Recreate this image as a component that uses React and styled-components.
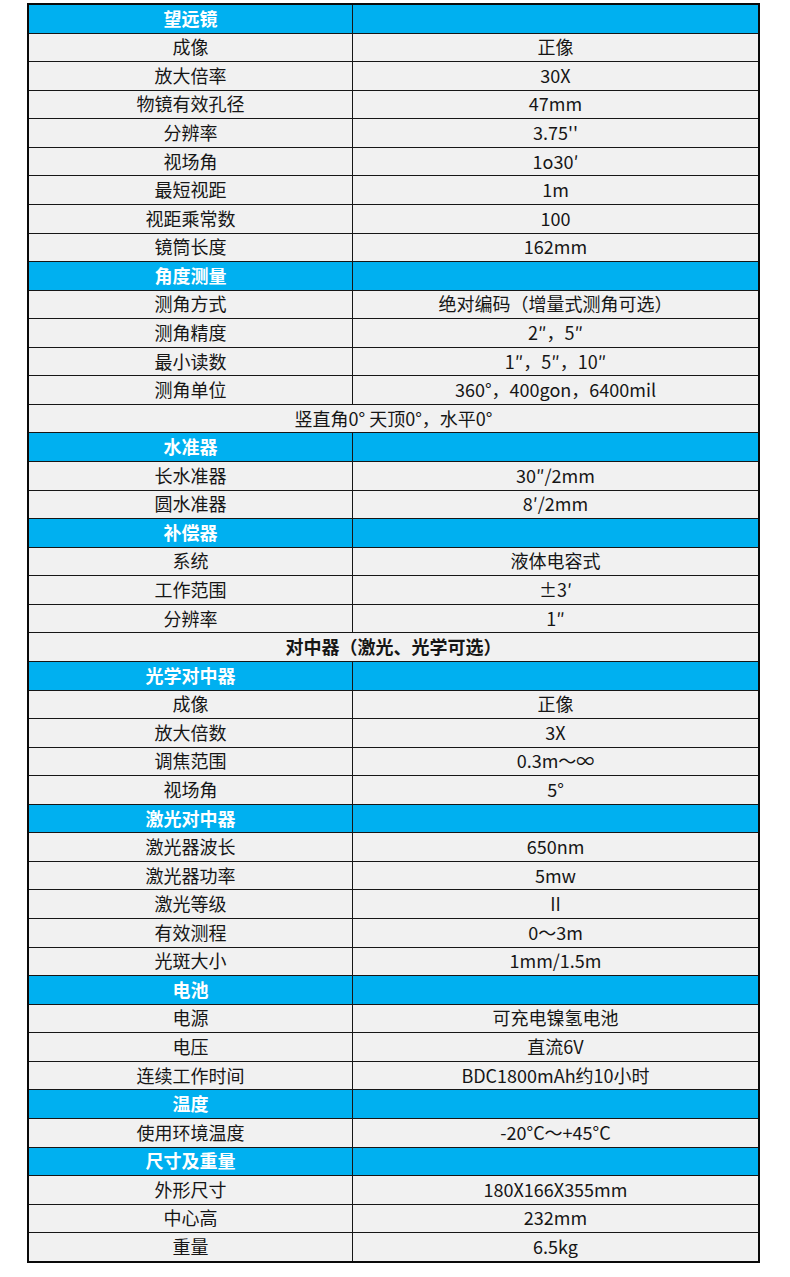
import React from 'react';
import styled, { createGlobalStyle } from 'styled-components';

const rows = [
  { type: 'head', label: '望远镜' },
  { label: '成像', value: '正像' },
  { label: '放大倍率', value: '30X' },
  { label: '物镜有效孔径', value: '47mm' },
  { label: '分辨率', value: "3.75''" },
  { label: '视场角', value: '1o30′' },
  { label: '最短视距', value: '1m' },
  { label: '视距乘常数', value: '100' },
  { label: '镜筒长度', value: '162mm' },
  { type: 'head', label: '角度测量' },
  { label: '测角方式', value: '绝对编码（增量式测角可选）' },
  { label: '测角精度', value: '2″，5″' },
  { label: '最小读数', value: '1″，5″，10″' },
  { label: '测角单位', value: '360°，400gon，6400mil' },
  { type: 'full', label: '竖直角0° 天顶0°，水平0°' },
  { type: 'head', label: '水准器' },
  { label: '长水准器', value: '30″/2mm' },
  { label: '圆水准器', value: '8′/2mm' },
  { type: 'head', label: '补偿器' },
  { label: '系统', value: '液体电容式' },
  { label: '工作范围', value: '±3′' },
  { label: '分辨率', value: '1″' },
  { type: 'full', label: '对中器（激光、光学可选）', bold: true },
  { type: 'head', label: '光学对中器' },
  { label: '成像', value: '正像' },
  { label: '放大倍数', value: '3X' },
  { label: '调焦范围', value: '0.3m～∞' },
  { label: '视场角', value: '5°' },
  { type: 'head', label: '激光对中器' },
  { label: '激光器波长', value: '650nm' },
  { label: '激光器功率', value: '5mw' },
  { label: '激光等级', value: 'II' },
  { label: '有效测程', value: '0～3m' },
  { label: '光斑大小', value: '1mm/1.5m' },
  { type: 'head', label: '电池' },
  { label: '电源', value: '可充电镍氢电池' },
  { label: '电压', value: '直流6V' },
  { label: '连续工作时间', value: 'BDC1800mAh约10小时' },
  { type: 'head', label: '温度' },
  { label: '使用环境温度', value: '-20°C～+45°C' },
  { type: 'head', label: '尺寸及重量' },
  { label: '外形尺寸', value: '180X166X355mm' },
  { label: '中心高', value: '232mm' },
  { label: '重量', value: '6.5kg' },
];

const GlobalStyle = createGlobalStyle`
  body {
    margin: 0;
    background: #fff;
    font-family: "Noto Sans CJK SC", "Noto Sans", sans-serif;
  }
`;

const Page = styled.div`
  padding: 3px 0 0 27px;
  width: 790px;
  height: 1277px;
  box-sizing: border-box;
`;

const Table = styled.div`
  width: 733px;
  box-sizing: border-box;
  border: 2px solid #0a0a0a;
  background: #161616;
  display: grid;
  grid-template-columns: 323px 405px;
  grid-auto-rows: 27.57px;
  gap: 1px;
`;

const Cell = styled.div`
  display: flex;
  align-items: center;
  justify-content: center;
  padding-bottom: 2px;
  box-sizing: border-box;
  background: ${(p) => (p.$head ? '#00b0f0' : '#f1f1f1')};
  color: ${(p) => (p.$head ? '#fff' : '#161616')};
  font-size: 18px;
  font-weight: ${(p) => (p.$bold || p.$head ? 700 : 400)};
  line-height: 1;
  white-space: nowrap;
  grid-column: ${(p) => (p.$full ? '1 / span 2' : 'auto')};
`;

export default function App() {
  return (
    <Page>
      <GlobalStyle />
      <Table>
        {rows.map((r, i) => {
          if (r.type === 'head') {
            return (
              <React.Fragment key={i}>
                <Cell $head>{r.label}</Cell>
                <Cell $head />
              </React.Fragment>
            );
          }
          if (r.type === 'full') {
            return (
              <Cell key={i} $full $bold={r.bold}>
                {r.label}
              </Cell>
            );
          }
          return (
            <React.Fragment key={i}>
              <Cell>{r.label}</Cell>
              <Cell>{r.value}</Cell>
            </React.Fragment>
          );
        })}
      </Table>
    </Page>
  );
}
